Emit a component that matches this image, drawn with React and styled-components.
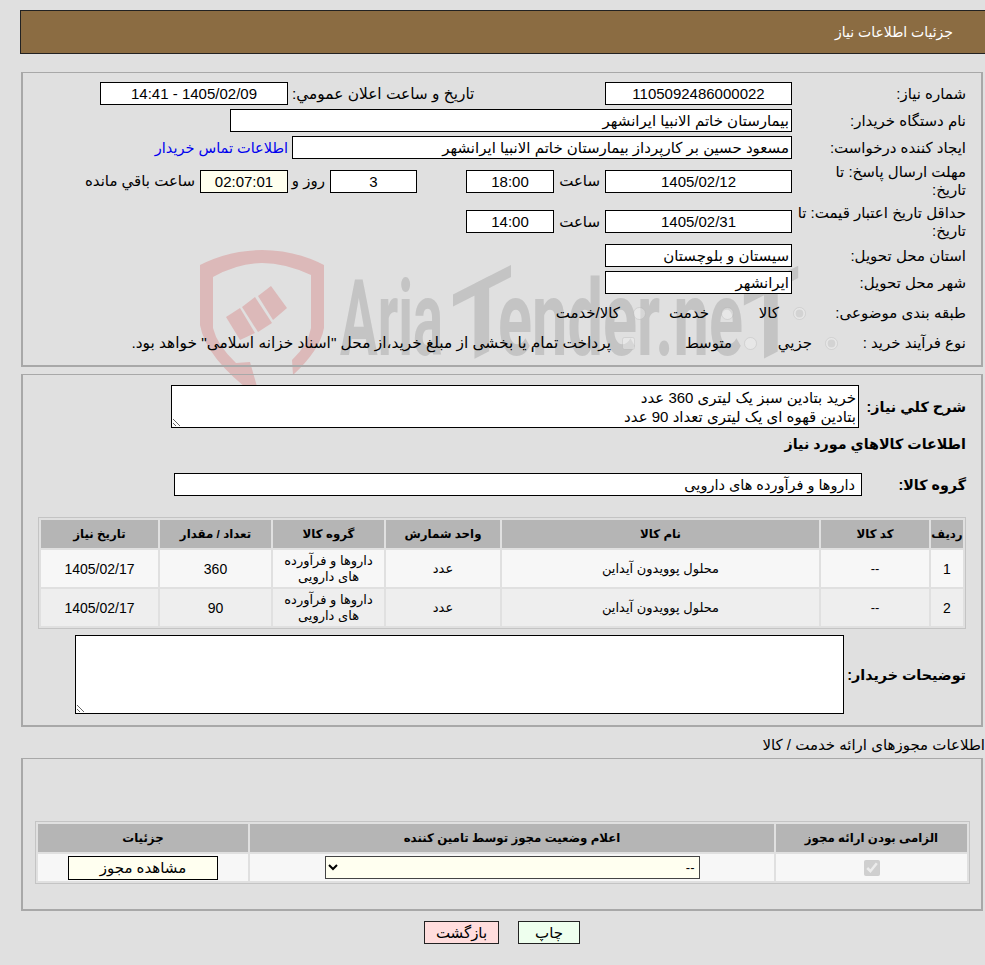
import React from "react";
import styled, { createGlobalStyle } from "styled-components";

const FONT = `"Liberation Sans", "DejaVu Sans", sans-serif`;

const Global = createGlobalStyle`
  html, body { margin: 0; padding: 0; background: #e0e0e0; }
  body { font-family: ${FONT}; font-size: 15px; color: #000; overflow: hidden; }
`;
const Page = styled.div`
  position: relative;
  width: 985px;
  height: 965px;
  padding-top: 10px;
  box-sizing: border-box;
  direction: rtl;
  overflow: hidden;
`;
const Watermark = styled.svg`
  position: absolute;
  left: 190px;
  top: 245px;
  width: 620px;
  height: 160px;
  z-index: 0;
`;
const Content = styled.div`
  position: relative;
  z-index: 1;
`;
const Header = styled.div`
  height: 44px;
  margin-left: 20px;
  box-sizing: border-box;
  border: 1px solid #222;
  border-right: 0;
  background: #8b6c42;
  color: #fff;
  display: flex;
  align-items: center;
  padding-right: 32px;
  font-size: 14px;
`;
const Panel = styled.div`
  margin: ${(p) => p.$top}px 2px 0 21px;
  height: ${(p) => p.$height}px;
  box-sizing: border-box;
  border-style: solid;
  border-width: 1px 2px 2px 2px;
  border-color: #a8a8a8;
  padding: ${(p) => p.$pad || 9}px 14px 0 0;
  display: flex;
  flex-direction: column;
  gap: ${(p) => p.$gap ?? 4}px;
`;
const Row = styled.div`
  display: flex;
  align-items: center;
  min-height: ${(p) => p.$h || 23}px;
  margin-top: ${(p) => p.$top || 0}px;
`;
const Label = styled.div`
  width: 175px;
  flex: none;
  box-sizing: border-box;
  line-height: 18px;
  padding-right: 1px;
`;
const Field = styled.div`
  width: ${(p) => p.$w}px;
  height: 23px;
  flex: none;
  box-sizing: border-box;
  border: 1px solid #000;
  background: ${(p) => p.$bg || "#fff"};
  display: flex;
  align-items: center;
  justify-content: ${(p) => (p.$start ? "flex-start" : "center")};
  padding: 0 ${(p) => p.$pad || 2}px;
  white-space: nowrap;
  font-size: ${(p) => p.$size || 15}px;
  margin-right: ${(p) => p.$mr || 0}px;
`;
const Inline = styled.span`
  flex: none;
  box-sizing: border-box;
  white-space: nowrap;
  width: ${(p) => (p.$w ? p.$w + "px" : "auto")};
  margin-right: ${(p) => p.$mr || 0}px;
  padding-left: ${(p) => p.$pl || 0}px;
  text-align: ${(p) => p.$align || "right"};
  font-size: ${(p) => p.$size || 15}px;
`;
const ContactLink = styled.a`
  color: #0000ee;
  margin-right: 4px;
  white-space: nowrap;
  font-size: 14.5px;
`;
const Choice = styled.input`
  width: 13px;
  height: 13px;
  margin: 0 ${(p) => p.$mr}px 0 0;
  flex: none;
  opacity: 0.55;
`;
const BoldLabel = styled.div`
  font-weight: bold;
  font-size: 14.3px;
  white-space: nowrap;
  box-sizing: border-box;
  padding-right: 1px;
  width: ${(p) => (p.$w ? p.$w + "px" : "auto")};
  flex: none;
`;
const Area = styled.textarea`
  display: block;
  width: ${(p) => p.$w}px;
  height: ${(p) => p.$h}px;
  flex: none;
  box-sizing: border-box;
  margin: 0;
  padding: 2px;
  border: 1px solid #000;
  border-radius: 0;
  outline: none;
  background: #fff;
  color: #000;
  direction: rtl;
  font-family: ${FONT};
  font-size: 15px;
  line-height: 19px;
  overflow: hidden;
`;
const Grid = styled.table`
  border-collapse: separate;
  border-spacing: 2px;
  border: 1px solid #c4c4c4;
  table-layout: fixed;
  width: ${(p) => p.$w}px;
  margin: ${(p) => p.$top}px ${(p) => p.$mr}px 0 0;
  flex: none;
`;
const Th = styled.th`
  background: #b5b5b5;
  height: 28px;
  padding: 0;
  font-size: 11.8px;
  font-weight: bold;
  text-align: center;
  width: ${(p) => p.$w}px;
`;
const Td = styled.td`
  background: ${(p) => (p.$alt ? "#eeeeee" : "#f7f7f7")};
  height: ${(p) => p.$h || 37}px;
  padding: 0 4px;
  font-size: ${(p) => (p.$num ? 14 : 13)}px;
  line-height: 16px;
  text-align: center;
`;
const SectionTitle = styled.div`
  margin-top: 9px;
  height: 18px;
  font-size: 15px;
  line-height: 18px;
  white-space: nowrap;
`;
const StatusSelect = styled.select`
  width: 375px;
  height: 23px;
  box-sizing: border-box;
  background-color: #fffff0;
  border: 1px solid #444;
  border-radius: 0;
  font-family: ${FONT};
  font-size: 13px;
  direction: rtl;
`;
const ViewButton = styled.button`
  width: 150px;
  height: 24px;
  box-sizing: border-box;
  background: #fffff0;
  border: 1px solid #000;
  border-radius: 0;
  padding: 0;
  font-family: ${FONT};
  font-size: 15px;
  display: block;
  margin: 0 auto;
`;
const Approve = styled.input`
  display: block;
  margin: 0 auto;
  width: 16px;
  height: 16px;
`;
const Actions = styled.div`
  display: flex;
  justify-content: center;
  gap: 19px;
  margin-top: 10px;
  padding-left: 19px;
`;
const ActionButton = styled.button`
  width: ${(p) => p.$w}px;
  height: 23px;
  box-sizing: border-box;
  background: ${(p) => p.$bg};
  border: 1px solid #222;
  border-radius: 0;
  padding: 0;
  font-family: ${FONT};
  font-size: 15px;
`;

const rows = [
  ["1", "360"],
  ["2", "90"],
];

const markText = { fill: "#c4c4c4", fontFamily: "Roboto, sans-serif", fontWeight: 700, fontSize: 106, direction: "ltr" };

export default function App() {
  return (
    <Page>
      <Global />
      <Watermark viewBox="0 0 620 160" aria-hidden="true">
        <path
          fill="#dcb9b9"
          d="M10 20 Q40 5 72 5 Q105 5 134 20 L134 83 Q130 105 103 130 L102 115 Q118 100 121 83 L121 30 Q95 18 72 18 Q48 18 23 32 L23 83 Q27 100 46 118 L60 117 L68 145 L72 155 Q16 115 10 80 Z"
        />
        <g fill="#dcb9b9">
          <polygon points="36,72 50,63 65,88 50,95" />
          <polygon points="52,62 65,52 82,78 68,87" />
          <polygon points="68,51 81,41 97,63 83,75" />
        </g>
        <text {...markText} x="150" y="110" textLength="103" lengthAdjust="spacingAndGlyphs">Aria</text>
        <text {...markText} x="-31" y="0" textLength="62" lengthAdjust="spacingAndGlyphs" transform="translate(292 110) skewY(-27)">T</text>
        <text {...markText} x="308" y="110" textLength="245" lengthAdjust="spacingAndGlyphs">ender.ne</text>
        <text {...markText} x="-29" y="0" textLength="58" lengthAdjust="spacingAndGlyphs" transform="translate(581 110) skewY(-27)">T</text>
      </Watermark>
      <Content>
        <Header>جزئیات اطلاعات نیاز</Header>
        <Panel $top={18} $height={295}>
          <Row>
            <Label>شماره نیاز:</Label>
            <Field $w={187}>1105092486000022</Field>
            <Inline $w={312} $mr={5} $pl={4} $align="left" $size={15.4}>تاريخ و ساعت اعلان عمومي:</Inline>
            <Field $w={188}>1405/02/09 - 14:41</Field>
          </Row>
          <Row>
            <Label>نام دستگاه خریدار:</Label>
            <Field $w={562} $start>بیمارستان خاتم الانبیا ایرانشهر</Field>
          </Row>
          <Row>
            <Label>ایجاد کننده درخواست:</Label>
            <Field $w={500} $start>مسعود حسین بر کارپرداز بیمارستان خاتم الانبیا ایرانشهر</Field>
            <ContactLink>اطلاعات تماس خریدار</ContactLink>
          </Row>
          <Row $h={36}>
            <Label>مهلت ارسال پاسخ: تا<br />تاریخ:</Label>
            <Field $w={187}>1405/02/12</Field>
            <Inline $w={46} $mr={5}>ساعت</Inline>
            <Field $w={88}>18:00</Field>
            <Field $w={87} $mr={49}>3</Field>
            <Inline $w={34} $mr={5}>روز و</Inline>
            <Field $w={88} $mr={3} $bg="#ffffee">02:07:01</Field>
            <Inline $mr={5}>ساعت باقي مانده</Inline>
          </Row>
          <Row $h={37}>
            <Label>حداقل تاریخ اعتبار قیمت: تا تاریخ:</Label>
            <Field $w={187}>1405/02/31</Field>
            <Inline $w={46} $mr={5}>ساعت</Inline>
            <Field $w={88}>14:00</Field>
          </Row>
          <Row>
            <Label>استان محل تحویل:</Label>
            <Field $w={187} $start>سیستان و بلوچستان</Field>
          </Row>
          <Row>
            <Label>شهر محل تحویل:</Label>
            <Field $w={187} $start>ایرانشهر</Field>
          </Row>
          <Row $h={30}>
            <Label>طبقه بندی موضوعی:</Label>
            <Choice type="radio" name="cat" defaultChecked disabled $mr={-14} />
            <Inline $mr={14} $w={45}>کالا</Inline>
            <Choice type="radio" name="cat" disabled $mr={0} />
            <Inline $mr={12} $w={63}>خدمت</Inline>
            <Choice type="radio" name="cat" disabled $mr={0} />
            <Inline $mr={13}>کالا/خدمت</Inline>
          </Row>
          <Row $h={22}>
            <Label>نوع فرآیند خرید :</Label>
            <Choice type="radio" name="proc" defaultChecked disabled $mr={-46} />
            <Inline $mr={13} $w={55}>جزیي</Inline>
            <Choice type="radio" name="proc" disabled $mr={0} />
            <Inline $mr={12} $w={97}>متوسط</Inline>
            <Choice type="checkbox" disabled $mr={0} />
            <Inline $mr={11} $size={15.4}>پرداخت تمام یا بخشی از مبلغ خرید،از محل "اسناد خزانه اسلامی" خواهد بود.</Inline>
          </Row>
        </Panel>
        <Panel $top={7} $height={353} $pad={10} $gap={0}>
          <Row $h={43}>
            <BoldLabel $w={108}>شرح کلي نیاز:</BoldLabel>
            <Area $w={688} $h={43} readOnly value={"خرید بتادین سبز یک لیتری 360 عدد\nبتادین قهوه ای یک لیتری تعداد 90 عدد"} />
          </Row>
          <Row $h={18} $top={7}>
            <BoldLabel>اطلاعات کالاهاي مورد نیاز</BoldLabel>
          </Row>
          <Row $top={20}>
            <BoldLabel $w={105}>گروه کالا:</BoldLabel>
            <Field $w={688} $start $pad={6} $size={14.5}>داروها و فرآورده های دارویی</Field>
          </Row>
          <Grid $w={928} $top={21} $mr={1}>
            <thead>
              <tr>
                <Th $w={32}>ردیف</Th>
                <Th $w={108}>کد کالا</Th>
                <Th $w={317}>نام کالا</Th>
                <Th $w={114}>واحد شمارش</Th>
                <Th $w={111}>گروه کالا</Th>
                <Th $w={111}>تعداد / مقدار</Th>
                <Th $w={117}>تاریخ نیاز</Th>
              </tr>
            </thead>
            <tbody>
              {rows.map(([n, q], i) => (
                <tr key={n}>
                  <Td $alt={i === 1} $num>{n}</Td>
                  <Td $alt={i === 1}>--</Td>
                  <Td $alt={i === 1}>محلول پوویدون آیداین</Td>
                  <Td $alt={i === 1}>عدد</Td>
                  <Td $alt={i === 1}>داروها و فرآورده های دارویی</Td>
                  <Td $alt={i === 1} $num>{q}</Td>
                  <Td $alt={i === 1} $num>1405/02/17</Td>
                </tr>
              ))}
            </tbody>
          </Grid>
          <Row $h={79} $top={6}>
            <BoldLabel $w={123}>توضیحات خریدار:</BoldLabel>
            <Area $w={769} $h={79} readOnly value="" />
          </Row>
        </Panel>
        <SectionTitle>اطلاعات مجوزهای ارائه خدمت / کالا</SectionTitle>
        <Panel $top={4} $height={153} $pad={62} $gap={0}>
          <Grid $w={935} $top={0} $mr={-3}>
            <thead>
              <tr>
                <Th $w={191}>الزامی بودن ارائه مجوز</Th>
                <Th $w={524}>اعلام وضعیت مجوز توسط تامین کننده</Th>
                <Th $w={210}>جزئیات</Th>
              </tr>
            </thead>
            <tbody>
              <tr>
                <Td $h={27}><Approve type="checkbox" checked disabled readOnly /></Td>
                <Td $h={27}><StatusSelect defaultValue="--"><option>--</option></StatusSelect></Td>
                <Td $h={27}><ViewButton type="button">مشاهده مجوز</ViewButton></Td>
              </tr>
            </tbody>
          </Grid>
        </Panel>
        <Actions>
          <ActionButton type="button" $w={62} $bg="#eeffee">چاپ</ActionButton>
          <ActionButton type="button" $w={75} $bg="#ffdddd">بازگشت</ActionButton>
        </Actions>
      </Content>
    </Page>
  );
}
